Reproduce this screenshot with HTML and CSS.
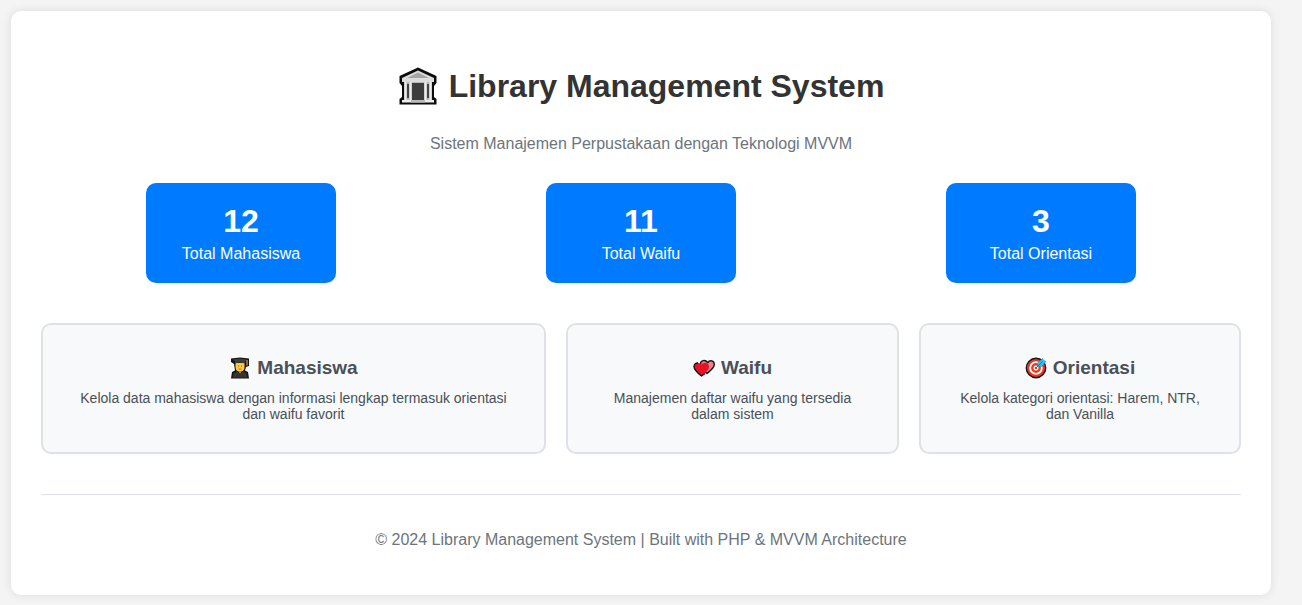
FILE: index.html
```html
<!DOCTYPE html>
<html lang="id">
<head>
<meta charset="utf-8">
<meta name="viewport" content="width=device-width, initial-scale=1">
<title>Library Management System</title>
<link rel="stylesheet" href="styles.css">
</head>
<body>
<main class="container">
  <header class="header">
    <h1 class="title">
      <svg class="title-icon" viewBox="0 0 40 40" aria-hidden="true">
        <path d="M20 1.500 38.500 10V17L36 20V31L38.500 33V38.500H1.500V33L4 31V20L1.500 17V10Z" fill="#0c0c0c"/>
        <path d="M20 4.500 36 12V16H4V12Z" fill="#dcdcdc"/>
        <path d="M20 6.500 31 12H9Z" fill="#a5a5a5"/>
        <path d="M6 16H34V34H6Z" fill="#b9b9b9"/>
        <path d="M14 17H26V34H14Z" fill="#3c3c3c"/>
        <path d="M10 18V32M30 18V32" stroke="#444" stroke-width="2"/>
        <path d="M12.500 16V34M27.500 16V34M7.500 16V34M32.500 16V34" stroke="#ececec" stroke-width="2"/>
        <path d="M4 34H36V36.500H4Z" fill="#ededed"/>
        <path d="M13 34H27V36.500H13Z" fill="#bbb"/>
      </svg>
      <span>Library Management System</span>
    </h1>
    <p class="subtitle">Sistem Manajemen Perpustakaan dengan Teknologi MVVM</p>
  </header>

  <section class="stats">
    <div class="stat"><div class="stat-number">12</div><div class="stat-label">Total Mahasiswa</div></div>
    <div class="stat"><div class="stat-number">11</div><div class="stat-label">Total Waifu</div></div>
    <div class="stat"><div class="stat-number">3</div><div class="stat-label">Total Orientasi</div></div>
  </section>

  <nav class="menu">
    <a class="card" href="#mahasiswa">
      <h2 class="card-title">
        <svg class="card-icon" viewBox="0 0 22 22" aria-hidden="true">
          <path d="M2 1.500 11 .5 20 1.500V9L17 10 16 13.500 19 15 20 21.500H2L3 15 6 13.500 5 7 2 5Z" fill="#141414"/>
          <path d="M6.500 6H15.500V10Q15.500 14.500 11 14.500T6.500 10Z" fill="#ffc83d"/>
          <path d="M9 9H9.800M12.200 9H13" stroke="#6b4a18" stroke-width="1"/>
          <path d="M9.500 12H12.500" stroke="#a36a1f" stroke-width=".8"/>
          <path d="M3.500 2.500 11 1.500 18 2.500 16 4.500V6.500L11 5.500 6 6.500V4.500Z" fill="#3d3d3d"/>
          <path d="M18 3V8.500" stroke="#c77c38" stroke-width="1.500"/>
          <path d="M4.500 16 8 14.500 11 16.500 14 14.500 17.500 16 18.300 20.500H3.700Z" fill="#343434"/>
          <path d="M9.500 14.500H12.500L11 16.500Z" fill="#f5ae2d"/>
        </svg>
        <span>Mahasiswa</span>
      </h2>
      <p class="card-text">Kelola data mahasiswa dengan informasi lengkap termasuk orientasi dan waifu favorit</p>
    </a>
    <a class="card" href="#waifu">
      <h2 class="card-title">
        <svg class="card-icon" viewBox="0 0 22 22" aria-hidden="true">
          <path d="M14 16.500C10 13 7.500 10 7.500 7C7.500 3 12.500 2.500 14.700 5.500C17 2.500 21.300 3.500 21.300 7.500C21.300 11 17.500 13.500 14 16.500Z" fill="#e8808a" stroke="#161616" stroke-width="1.400" stroke-linejoin="round"/>
          <path d="M8.500 19C4 15.500 1 12.500 1 9.500C1 5 6.500 4.500 8.500 8C10.500 4.500 16 5 16 9.500C16 12.500 13 15.500 8.500 19Z" fill="#e81224"/>
          <path d="M12 16.500 8.500 19C4 15.500 1 12.500 1 9.500C1 7 3 5.800 5 6" fill="none" stroke="#161616" stroke-width="1.400" stroke-linejoin="round"/>
        </svg>
        <span>Waifu</span>
      </h2>
      <p class="card-text">Manajemen daftar waifu yang tersedia dalam sistem</p>
    </a>
    <a class="card" href="#orientasi">
      <h2 class="card-title">
        <svg class="card-icon" viewBox="0 0 22 22" aria-hidden="true">
          <circle cx="11" cy="11" r="9.700" fill="#e63b22" stroke="#161616" stroke-width="1.400"/>
          <circle cx="11" cy="11" r="5.800" fill="#e63b22" stroke="#fff" stroke-width="1.800"/>
          <circle cx="11" cy="11" r="2.500" fill="#fff"/>
          <circle cx="11" cy="11" r="1.200" fill="#e63b22"/>
          <path d="M12.500 9.500V6L17.500 1.500 18.500 3.500 21 4.500 16.500 9.500Z" fill="#35bdf2" stroke="#168bb5" stroke-width=".6"/>
          <path d="M11 11 17.500 4.500" stroke="#167ca5" stroke-width="1"/>
        </svg>
        <span>Orientasi</span>
      </h2>
      <p class="card-text">Kelola kategori orientasi: Harem, NTR, dan Vanilla</p>
    </a>
  </nav>

  <footer class="footer">© 2024 Library Management System | Built with PHP &amp; MVVM Architecture</footer>
</main>
</body>
</html>
```
FILE: styles.css
```css
* { box-sizing: border-box; }
body {
  margin: 0;
  padding: 11px 31px 10px 11px;
  background: #f4f4f4;
  font-family: Arial, "Liberation Sans", sans-serif;
  font-size: 16px;
  line-height: 18px;
}
.container {
  padding: 30px;
  background: #fff;
  border-radius: 10px;
  box-shadow: 0 0 10px rgba(0, 0, 0, 0.1);
}
.header { padding-top: 21px; text-align: center; }
.title {
  display: flex;
  align-items: center;
  justify-content: center;
  gap: 11px;
  margin: 0 0 25px;
  color: #333;
  font-size: 32px;
  line-height: 48px;
}
.title-icon { width: 40px; height: 40px; flex: none; }
.subtitle { margin: 0 0 30px; color: #6c757d; }
.stats {
  display: flex;
  justify-content: space-around;
  margin-bottom: 40px;
}
.stat {
  min-width: 190px;
  padding: 20px;
  border-radius: 10px;
  background: #007bff;
  color: #fff;
  text-align: center;
}
.stat-number {
  margin-bottom: 5px;
  font-size: 32px;
  font-weight: bold;
  line-height: 36px;
}
.stat-label { line-height: 19px; }
.menu {
  display: grid;
  grid-template-columns: 505fr 333fr 322fr;
  gap: 20px;
  margin-bottom: 40px;
}
.card {
  padding: 30px;
  border: 2px solid #dee2e6;
  border-radius: 10px;
  background: #f8f9fa;
  color: #495057;
  text-align: center;
  text-decoration: none;
}
.card-title {
  display: flex;
  align-items: center;
  justify-content: center;
  gap: 6px;
  margin: 0 0 10px;
  font-size: 19px;
  line-height: 25px;
}
.card-icon { width: 22px; height: 22px; flex: none; }
.card-text { margin: 0; font-size: 14px; line-height: 16px; }
.footer {
  padding: 36px 0 16px;
  border-top: 1px solid #dee2e6;
  color: #6c757d;
  text-align: center;
}
```
